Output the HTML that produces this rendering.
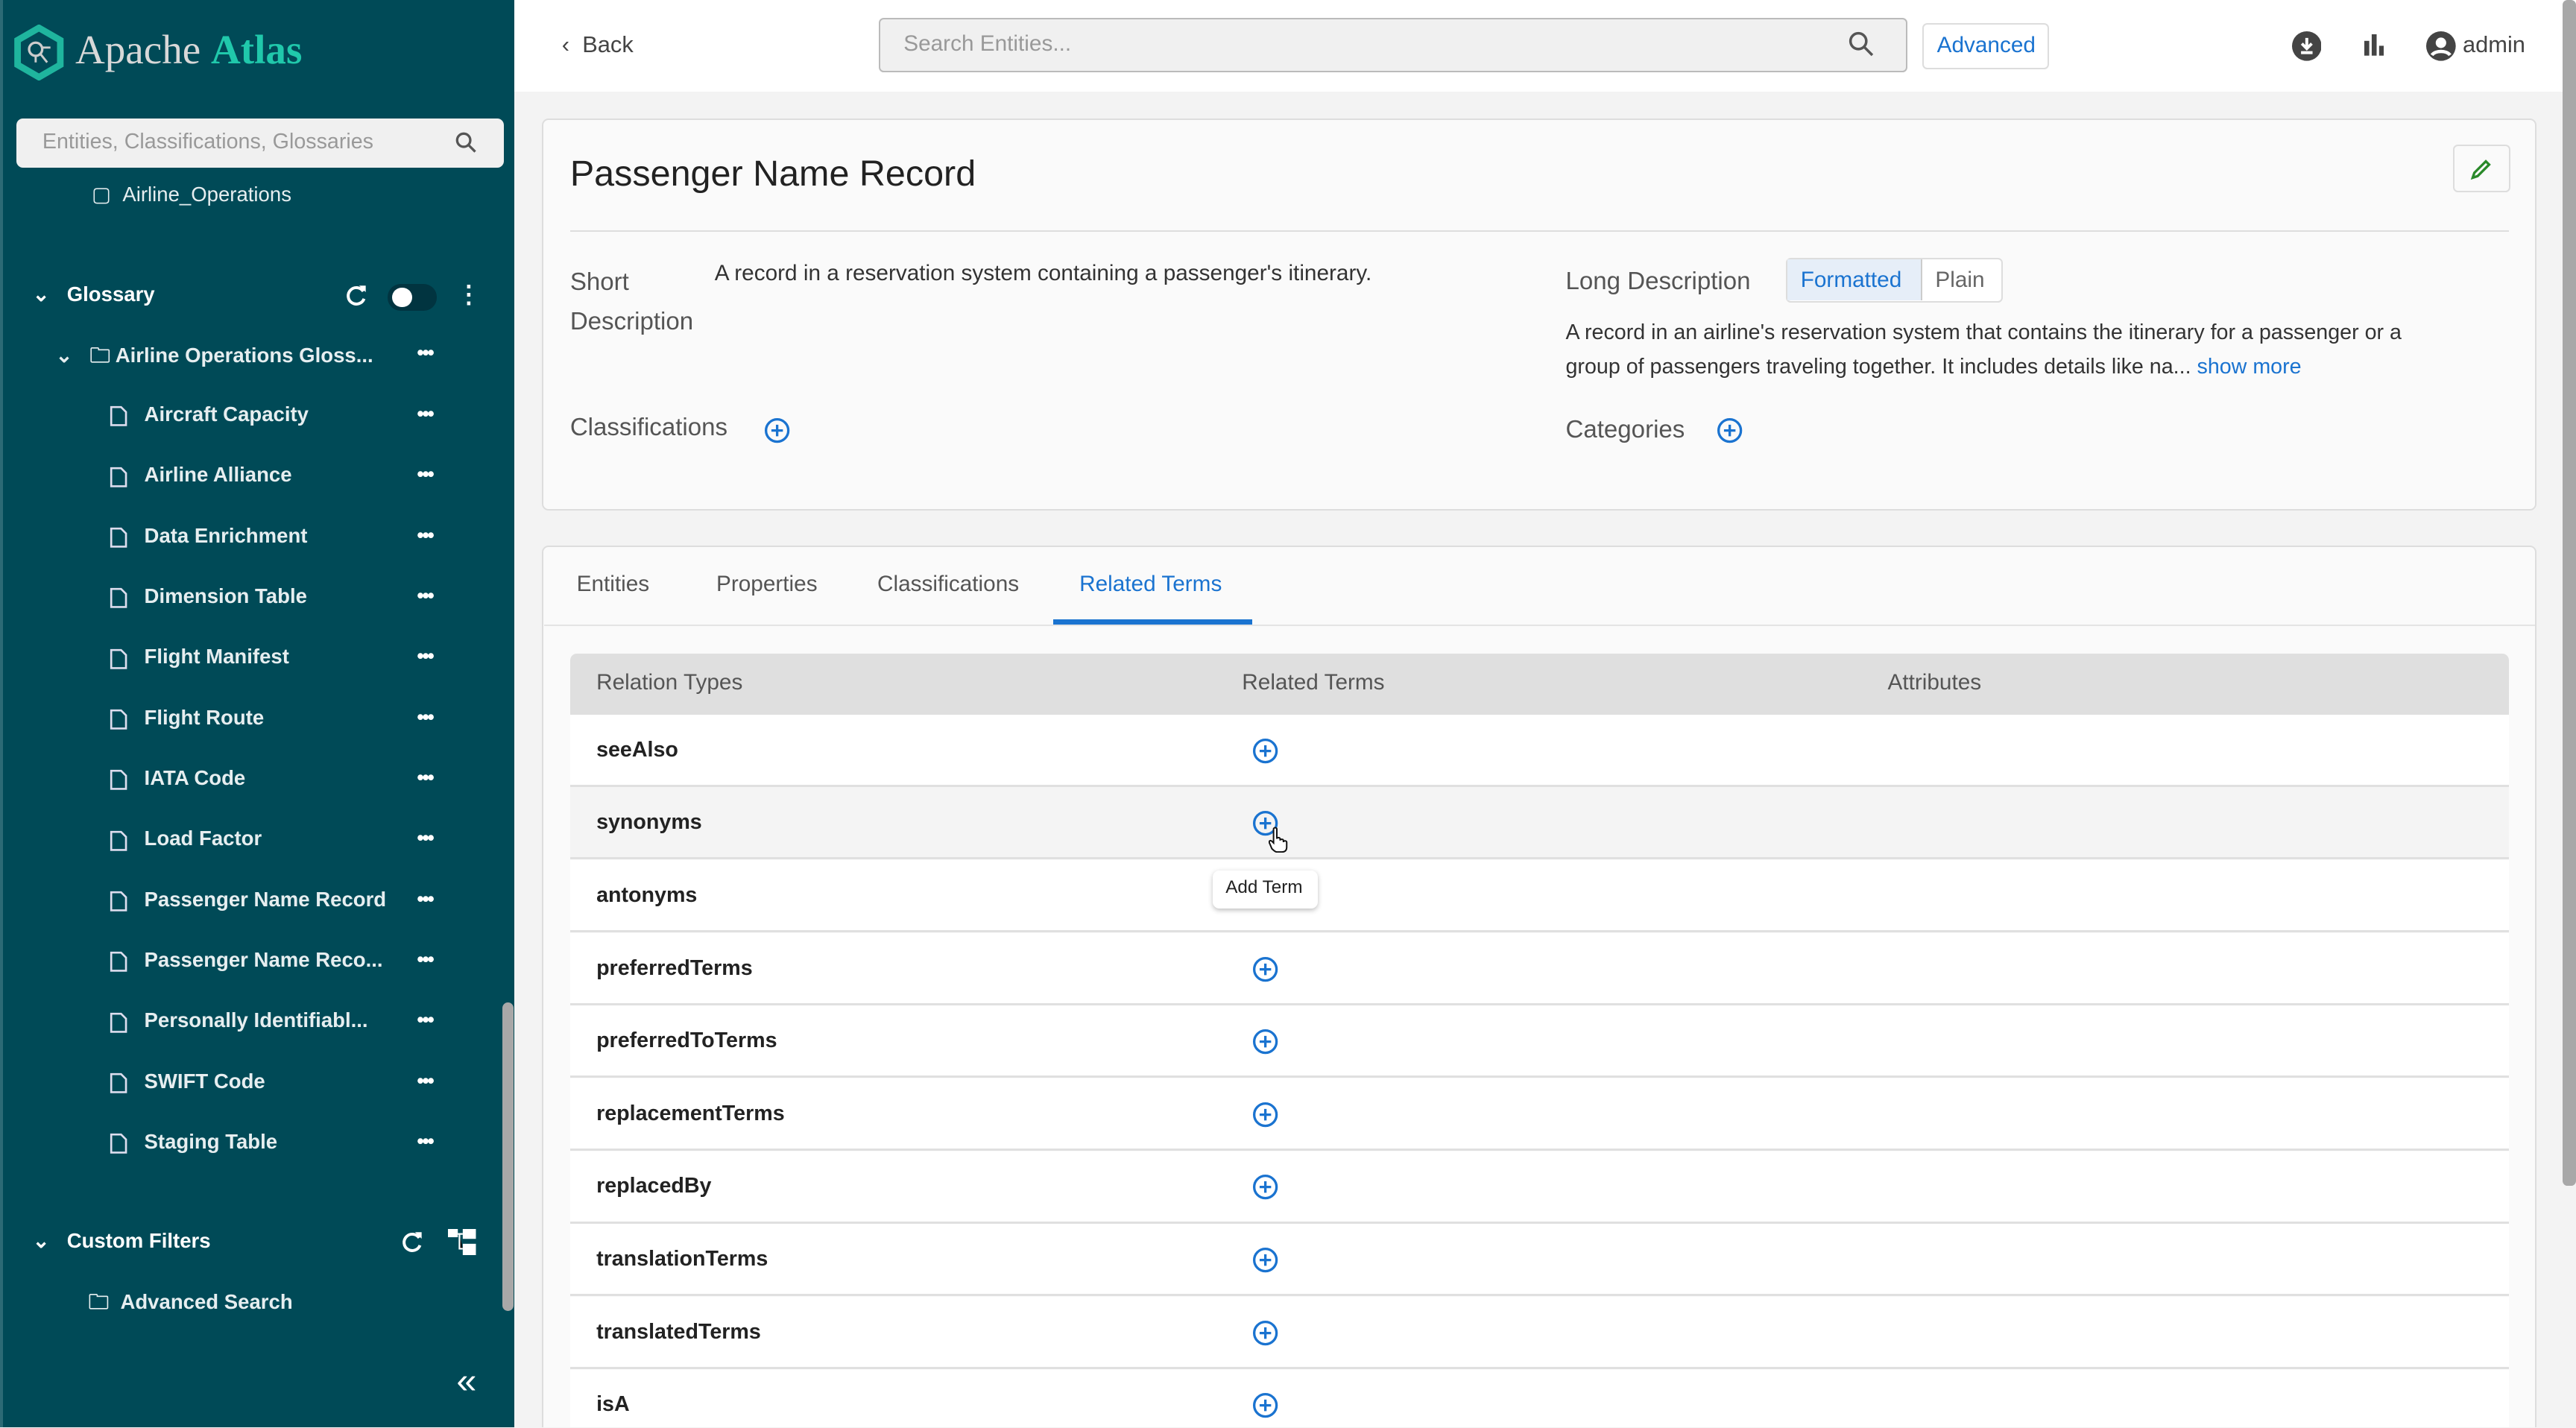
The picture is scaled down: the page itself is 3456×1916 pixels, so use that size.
<!DOCTYPE html>
<html><head><meta charset="utf-8"><style>
*{box-sizing:border-box;margin:0;padding:0}
html,body{width:3456px;height:1916px;overflow:hidden;background:#f3f3f3}
#root{zoom:2.2041;width:1568px;height:869px;position:relative;font-family:"Liberation Sans",sans-serif;color:#333;overflow:hidden}
.a{position:absolute;white-space:nowrap}
#side{position:absolute;left:0;top:0;width:313px;height:869px;background:#004a57;border-left:2px solid #2c6a75}
.si{color:#e6eef0;font-size:12.5px;font-weight:bold}
.dots{color:#fff;font-size:12px;letter-spacing:-1px;font-weight:bold}
.hdr{color:#fff;font-size:12.5px;font-weight:bold}
.lbl{font-size:15px;color:#555}
.row{position:absolute;left:347px;width:1180px;height:44px;border-bottom:1.5px solid #e0e0e0;background:#fff}
.row span{position:absolute;left:16px;top:14px;font-size:13px;font-weight:bold;color:#222}
.plus{position:absolute;left:415px;top:14px}
.tab{font-size:13.5px;color:#555}
</style></head><body><div id="root">
<div id="side">
  <svg class="a" style="left:6px;top:15px" width="32" height="34" viewBox="0 0 32 34"><polygon points="16,2 29,9.5 29,24.5 16,32 3,24.5 3,9.5" fill="none" stroke="#1fb59e" stroke-width="4"/><circle cx="14" cy="15" r="4" fill="none" stroke="#ccc" stroke-width="1.5"/><path d="M17 18l4 5M18 14h5M14 19v4" stroke="#ccc" stroke-width="1.3"/></svg>
  <div class="a" style="left:44px;top:16px;font-family:'Liberation Serif',serif;font-size:25px;color:#d8d8d8">Apache <span style="color:#20c8ab;font-weight:bold">Atlas</span></div>
  <div class="a" style="left:8px;top:72px;width:297px;height:30px;background:#f0f0f0;border-radius:4px"></div>
  <div class="a" style="left:24px;top:79px;font-size:13px;color:#999">Entities, Classifications, Glossaries</div>
  <svg class="a" style="left:275px;top:80px" width="14" height="14"><circle cx="5.5" cy="5.5" r="4" fill="none" stroke="#555" stroke-width="1.5"/><path d="M8.5 8.5l4 4" stroke="#555" stroke-width="1.5"/></svg>
  <div class="a si" style="left:54px;top:111px;font-weight:normal">▢ &nbsp;Airline_Operations</div>
  <div class="a hdr" style="left:18px;top:172px">⌄&nbsp;&nbsp;&nbsp;Glossary</div>
  <svg class="a" style="left:208px;top:173px" width="14" height="14"><path d="M11.5 4.5A5 5 0 1 0 12 9" fill="none" stroke="#fff" stroke-width="1.8"/><path d="M9 1l4 0 0 4z" fill="#fff"/></svg>
  <div class="a" style="left:234px;top:173px;width:30px;height:16px;border-radius:8px;background:#013440"></div>
  <div class="a" style="left:237px;top:175px;width:12px;height:12px;border-radius:6px;background:#fff"></div>
  <div class="a" style="left:276px;top:170px;color:#fff;font-size:15px;font-weight:bold">⋮</div>
  <div class="a si" style="left:32px;top:208px">⌄&nbsp;&nbsp;&nbsp;🗀 Airline Operations Gloss...</div>
  <div class="a dots" style="left:252px;top:208px">•••</div>
  <div id="items"></div>
  <div class="a hdr" style="left:18px;top:748px">⌄&nbsp;&nbsp;&nbsp;Custom Filters</div>
  <svg class="a" style="left:242px;top:749px" width="14" height="14"><path d="M11.5 4.5A5 5 0 1 0 12 9" fill="none" stroke="#fff" stroke-width="1.8"/><path d="M9 1l4 0 0 4z" fill="#fff"/></svg>
  <svg class="a" style="left:271px;top:748px" width="17" height="16"><rect x="0" y="0" width="6" height="5" fill="#fff"/><rect x="9" y="0" width="8" height="6" fill="#fff"/><rect x="9" y="9" width="8" height="7" fill="#fff"/><path d="M6 3h3M7 3v9h2" stroke="#fff"/></svg>
  <div class="a si" style="left:52px;top:784px">🗀 &nbsp;Advanced Search</div>
  <div class="a" style="left:304px;top:610px;width:7px;height:188px;border-radius:4px;background:#a8a8a8"></div>
  <div class="a" style="left:276px;top:828px;color:#fff;font-size:22px">«</div>
</div>
<div class="a" style="left:313px;top:0;width:1255px;height:56px;background:#fff"></div>
<div class="a" style="left:342px;top:19px;font-size:14px;color:#444">‹&nbsp; Back</div>
<div class="a" style="left:535px;top:11px;width:626px;height:33px;background:#f0f0f0;border:1px solid #bbb;border-radius:3px"></div>
<div class="a" style="left:550px;top:19px;font-size:13.5px;color:#999">Search Entities...</div>
<svg class="a" style="left:1125px;top:19px" width="16" height="16"><circle cx="6" cy="6" r="4.8" fill="none" stroke="#555" stroke-width="1.6"/><path d="M9.5 9.5l5 5" stroke="#555" stroke-width="1.6"/></svg>
<div class="a" style="left:1170px;top:14px;width:77px;height:28px;border:1px solid #ddd;border-radius:3px;background:#fff"></div>
<div class="a" style="left:1179px;top:20px;font-size:13.5px;color:#1a73d0">Advanced</div>
<svg class="a" style="left:1395px;top:19px" width="18" height="18"><circle cx="9" cy="9" r="9" fill="#444"/><path d="M9 4v6M6 7.5l3 3 3-3M5.5 13h7" stroke="#fff" stroke-width="1.8" fill="none"/></svg>
<svg class="a" style="left:1439px;top:21px" width="12" height="13"><rect x="0" y="4" width="3" height="9" fill="#444"/><rect x="4.5" y="0" width="3" height="13" fill="#444"/><rect x="9" y="7" width="3" height="6" fill="#444"/></svg>
<svg class="a" style="left:1477px;top:19px" width="18" height="18"><circle cx="9" cy="9" r="9" fill="#444"/><circle cx="9" cy="7" r="3.2" fill="#fff"/><path d="M3.5 14.5c2-3 9-3 11 0" stroke="#fff" stroke-width="2" fill="none"/></svg>
<div class="a" style="left:1499px;top:19px;font-size:14px;color:#444">admin</div>
<div class="a" style="left:1560px;top:0;width:8px;height:722px;background:#a8a8a8;border-radius:3px"></div>

<div class="a" style="left:330px;top:72px;width:1214px;height:239px;background:#fafafa;border:1px solid #ddd;border-radius:4px"></div>
<div class="a" style="left:347px;top:93px;font-size:22px;color:#222">Passenger Name Record</div>
<div class="a" style="left:1493px;top:88px;width:35px;height:29px;border:1px solid #ddd;border-radius:3px;background:#fafafa"></div>
<svg class="a" style="left:1503px;top:96px" width="14" height="14"><path d="M2 12l1-3 7-7 2 2-7 7z" fill="none" stroke="#2a8a2a" stroke-width="1.5"/></svg>
<div class="a" style="left:347px;top:140px;width:1180px;height:1px;background:#ddd"></div>
<div class="a lbl" style="left:347px;top:160px;line-height:24px">Short<br>Description</div>
<div class="a" style="left:435px;top:159px;font-size:13.5px;color:#333">A record in a reservation system containing a passenger's itinerary.</div>
<div class="a lbl" style="left:347px;top:252px">Classifications</div>
<svg class="a" style="left:465px;top:254px" width="16" height="16"><circle cx="8" cy="8" r="6.8" fill="none" stroke="#1a73d0" stroke-width="1.5"/><path d="M8 4.5v7M4.5 8h7" stroke="#1a73d0" stroke-width="1.5"/></svg>
<div class="a lbl" style="left:953px;top:163px">Long Description</div>
<div class="a" style="left:1087px;top:157px;width:132px;height:27px;border:1px solid #ddd;border-radius:3px;background:#fff"></div>
<div class="a" style="left:1088px;top:158px;width:82px;height:25px;background:#e6eef8;border-right:1px solid #ccc"></div>
<div class="a" style="left:1096px;top:163px;font-size:13.5px;color:#1a73d0">Formatted</div>
<div class="a" style="left:1178px;top:163px;font-size:13.5px;color:#666">Plain</div>
<div class="a" style="left:953px;top:192px;font-size:13px;color:#333;line-height:21px">A record in an airline's reservation system that contains the itinerary for a passenger or a<br>group of passengers traveling together. It includes details like na... <span style="color:#1a73d0">show more</span></div>
<div class="a lbl" style="left:953px;top:253px">Categories</div>
<svg class="a" style="left:1045px;top:254px" width="16" height="16"><circle cx="8" cy="8" r="6.8" fill="none" stroke="#1a73d0" stroke-width="1.5"/><path d="M8 4.5v7M4.5 8h7" stroke="#1a73d0" stroke-width="1.5"/></svg>

<div class="a" style="left:330px;top:332px;width:1214px;height:560px;background:#fafafa;border:1px solid #ddd;border-radius:4px"></div>
<div class="a" style="left:331px;top:380px;width:1212px;height:1px;background:#e4e4e4"></div>
<div class="a tab" style="left:351px;top:348px">Entities</div>
<div class="a tab" style="left:436px;top:348px">Properties</div>
<div class="a tab" style="left:534px;top:348px">Classifications</div>
<div class="a tab" style="left:657px;top:348px;color:#1a73d0">Related Terms</div>
<div class="a" style="left:641px;top:377px;width:121px;height:3px;background:#1a73d0"></div>
<div class="a" style="left:347px;top:398px;width:1180px;height:37px;background:#dfdfdf;border-radius:4px 4px 0 0"></div>
<div class="a" style="left:363px;top:408px;font-size:13.5px;color:#555">Relation Types</div>
<div class="a" style="left:756px;top:408px;font-size:13.5px;color:#555">Related Terms</div>
<div class="a" style="left:1149px;top:408px;font-size:13.5px;color:#555">Attributes</div>
<div id="rows"></div>
<div class="a" style="left:738px;top:530px;width:64px;height:23px;background:#fff;border-radius:4px;box-shadow:0 1px 3px rgba(0,0,0,.25)"></div>
<div class="a" style="left:746px;top:534px;font-size:11px;color:#222">Add Term</div>
<svg class="a" style="left:772px;top:503px" width="12" height="16"><path d="M3 1.5c0-1 2-1 2 0v6c0-1 2-1 2 0v1c0-1 2-1 2 0v1c0-1 2-1 2 0v3c0 2-1 3-3 3H5c-1 0-2-1-3-2L0.5 10c-.5-1 .5-2 1.5-1L3 10z" fill="#fff" stroke="#111" stroke-width=".9"/></svg>
</div>
<script>
var it=["Aircraft Capacity","Airline Alliance","Data Enrichment","Dimension Table","Flight Manifest","Flight Route","IATA Code","Load Factor","Passenger Name Record","Passenger Name Reco...","Personally Identifiabl...","SWIFT Code","Staging Table"];
var h="";it.forEach(function(t,i){var y=245+i*36.9;h+='<svg class="a" style="left:65px;top:'+(y+2)+'px" width="11" height="13"><path d="M1 1h6l3 3v8H1z" fill="none" stroke="#dde" stroke-width="1.2"/></svg><div class="a si" style="left:86px;top:'+y+'px">'+t+'</div><div class="a dots" style="left:252px;top:'+y+'px">•••</div>';});
document.getElementById("items").outerHTML=h;
var r=["seeAlso","synonyms","antonyms","preferredTerms","preferredToTerms","replacementTerms","replacedBy","translationTerms","translatedTerms","isA"];
var s="";r.forEach(function(t,i){var y=435+i*44.3;s+='<div class="row" style="top:'+y+'px;'+(i==1?'background:#f4f4f4':'')+'"><span>'+t+'</span>'+(i==2?'':'<svg class="plus" width="16" height="16"><circle cx="8" cy="8" r="6.8" fill="none" stroke="#1a73d0" stroke-width="1.5"/><path d="M8 4.5v7M4.5 8h7" stroke="#1a73d0" stroke-width="1.5"/></svg>')+'</div>';});
document.getElementById("rows").outerHTML=s;
</script>
</body></html>
